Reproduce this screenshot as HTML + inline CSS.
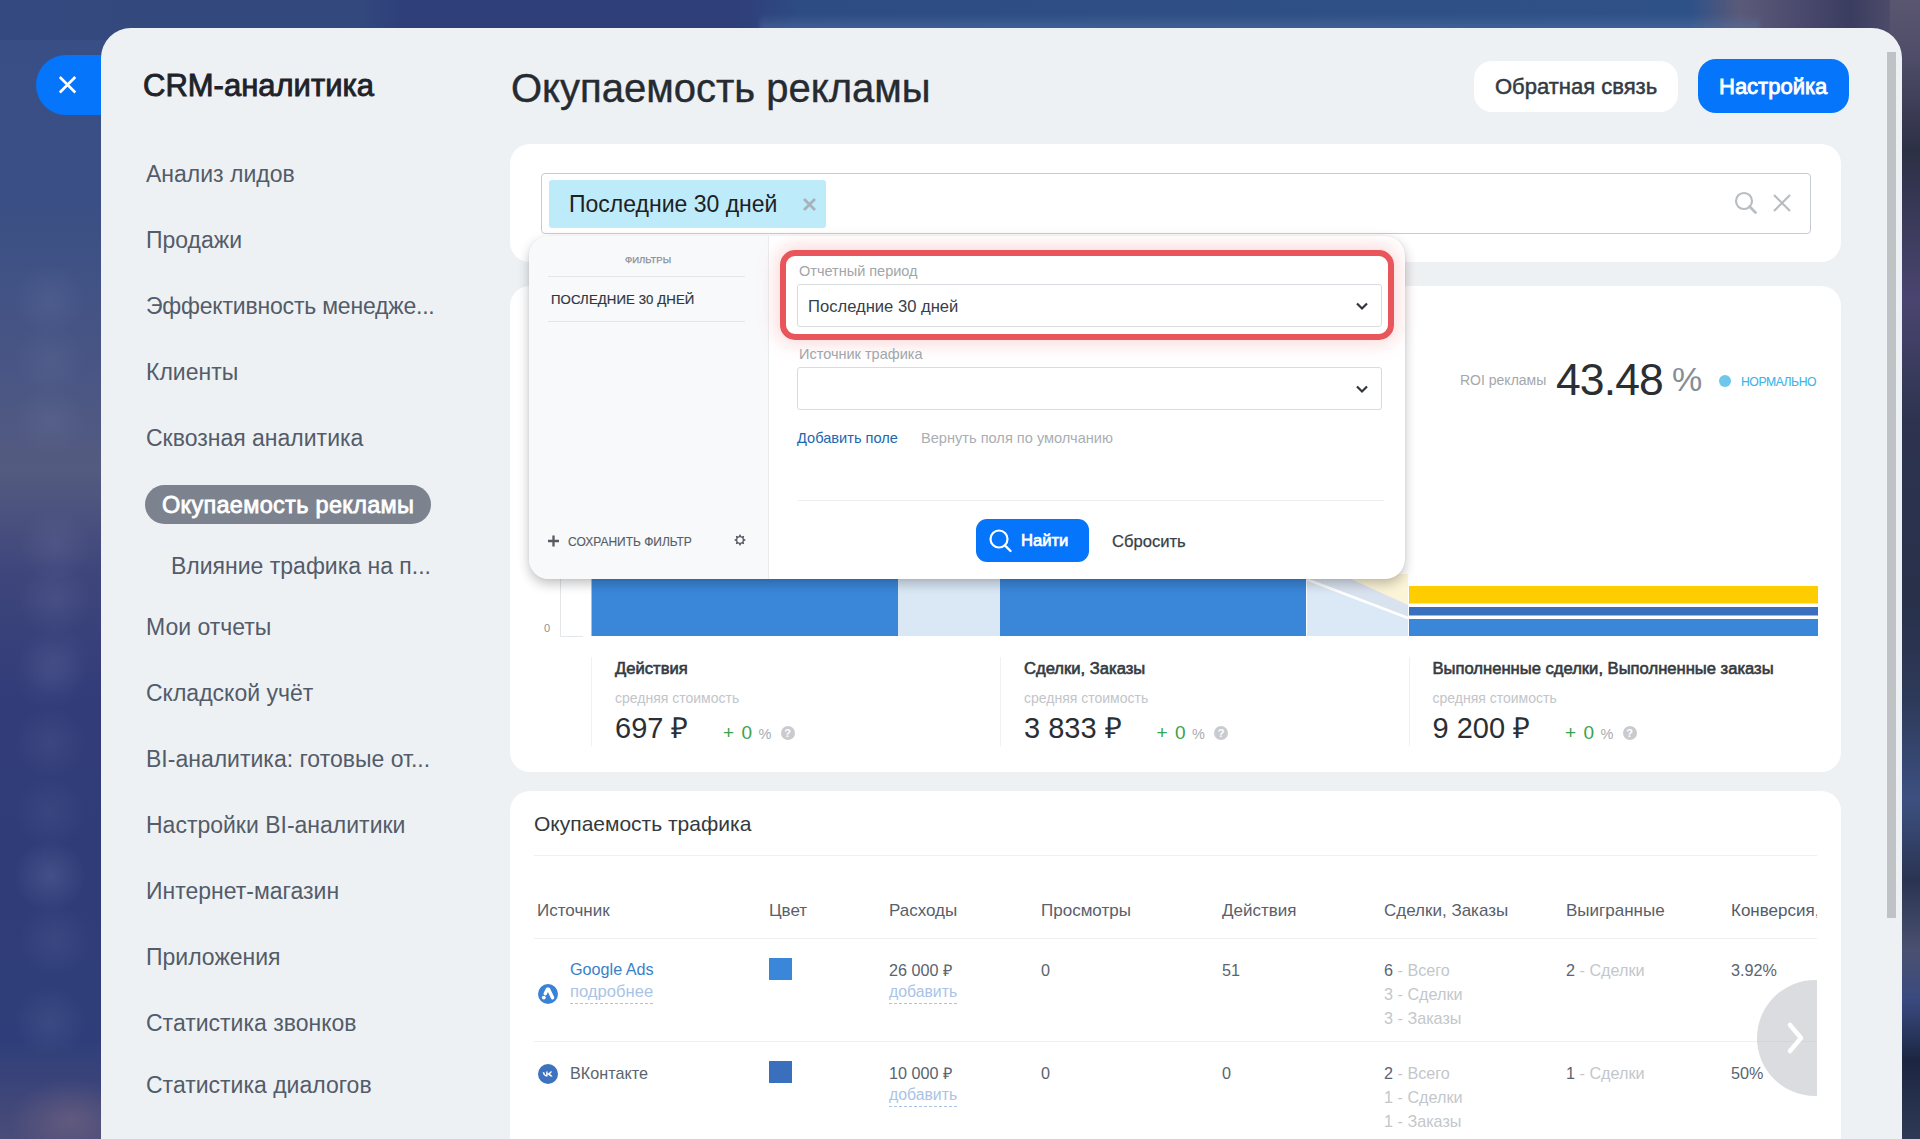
<!DOCTYPE html>
<html><head><meta charset="utf-8">
<style>
*{margin:0;padding:0;box-sizing:border-box}
html,body{width:1920px;height:1139px;overflow:hidden}
body{position:relative;font-family:"Liberation Sans",sans-serif;background:#33467c}
.a{position:absolute;white-space:nowrap;line-height:1}
#bg{position:absolute;left:0;top:0;width:1920px;height:1139px;background:linear-gradient(180deg,#394e84 0px,#3a4f85 200px,#4a5684 380px,#545b80 470px,#3f467c 570px,#323c79 700px,#2f3c78 900px,#2f3e7a 1040px,#4a4c78 1139px)}
#bgtop{position:absolute;left:0;top:0;width:1920px;height:40px;background:linear-gradient(90deg,#34497f 0px,#33497e 360px,#2f3f7a 400px,#2f3f7a 740px,#2e4c84 800px,#2e5086 1400px,#2e5188 1690px,#5b5a78 1740px,#4a4a6e 1800px,#3a3c60 1850px,#5a5670 1920px)}
#bgtopglow{position:absolute;left:760px;top:14px;width:1000px;height:16px;background:linear-gradient(180deg,rgba(90,120,170,0),rgba(90,120,170,.5));filter:blur(2px)}
#blobs{position:absolute;left:0;top:0;width:110px;height:1139px;background:radial-gradient(circle 36px at 50px 300px,rgba(200,210,240,0.07),rgba(200,210,240,0)),radial-gradient(circle 36px at 50px 360px,rgba(200,210,240,0.06),rgba(200,210,240,0)),radial-gradient(circle 36px at 50px 420px,rgba(200,210,240,0.06),rgba(200,210,240,0)),radial-gradient(circle 36px at 55px 545px,rgba(200,210,240,0.08),rgba(200,210,240,0)),radial-gradient(circle 36px at 55px 600px,rgba(200,210,240,0.08),rgba(200,210,240,0)),radial-gradient(circle 36px at 55px 660px,rgba(200,210,240,0.06),rgba(200,210,240,0)),radial-gradient(circle 36px at 50px 675px,rgba(200,210,240,0.06),rgba(200,210,240,0)),radial-gradient(circle 36px at 50px 743px,rgba(200,210,240,0.07),rgba(200,210,240,0)),radial-gradient(circle 36px at 50px 812px,rgba(200,210,240,0.06),rgba(200,210,240,0)),radial-gradient(circle 36px at 50px 876px,rgba(200,210,240,0.13),rgba(200,210,240,0)),radial-gradient(circle 36px at 55px 940px,rgba(200,210,240,0.07),rgba(200,210,240,0)),radial-gradient(circle 36px at 50px 1022px,rgba(200,210,240,0.08),rgba(200,210,240,0)),radial-gradient(ellipse 60px 40px at 70px 1120px,rgba(150,120,140,.35),rgba(150,120,140,0))}
#bgright{position:absolute;left:1890px;top:0;width:30px;height:1139px;background:linear-gradient(180deg,#5a5670 0px,#4e4c68 60px,#2c3045 150px,#3a3a5a 220px,#4a4570 300px,#2e3450 420px,#28304a 600px,#2e3a5a 700px,#3c5080 800px,#2a3452 880px,#4a5070 950px,#3a4a80 1000px,#1c2642 1060px,#2e3a55 1139px)}
#close{position:absolute;left:36px;top:55px;width:90px;height:60px;border-radius:30px 0 0 30px;background:#0575fb}
#panel{position:absolute;left:101px;top:28px;width:1801px;height:1140px;border-radius:30px 30px 0 0;background:#eef1f4;overflow:hidden}
#scroll{position:absolute;left:1887px;top:52px;width:9px;height:866px;background:#bfc3c5}
.side{color:#535c69;font-size:23px}
.card{position:absolute;background:#fff;border-radius:20px}
.st{font-size:16.6px;color:#333a40;-webkit-text-stroke:0.6px #333a40}
.sc{font-size:14px;color:#c2c5c9}
.sv{font-size:29px;color:#2b2f33}
.sp{font-size:19px}
.g{color:#3aa34b}
.pc{font-size:14.5px;color:#a9adb1}
.q{display:inline-block;width:14px;height:14px;border-radius:50%;background:#c9cbce;color:#fff;font-size:11px;font-weight:bold;text-align:center;line-height:14px;}
.lbl{font-size:14.5px;color:#a0a6ab}
.sel{width:585px;height:43px;border:1px solid #d8dce0;border-radius:3px;background:#fff}
.th{top:902px;font-size:17px;color:#58606b}
.td{font-size:16.2px;color:#5b6470}
.gr{color:#c3c7cb}
.lk{color:#a9c4e6;border-bottom:1px dashed #a9c4e6;padding-bottom:3px;font-size:15.8px}
.ic{width:20px;height:20px;border-radius:50%}
.ic svg{display:block}
</style></head>
<body>
<div id="bg"></div><div id="bgtop"></div><div id="bgtopglow"></div><div id="bgright"></div><div id="blobs"></div>
<div id="close"><svg width="60" height="60" style="position:absolute;left:1px;top:0" viewBox="0 0 60 60"><path d="M22.8 22 L38.3 37.5 M38.3 22 L22.8 37.5" stroke="#fff" stroke-width="2.6"/></svg></div>
<div id="panel"></div>
<div id="scroll"></div>

<!-- sidebar -->
<div class="a" style="left:143px;top:70px;font-size:31px;color:#1f2329;-webkit-text-stroke:0.9px #1f2329">CRM-аналитика</div>
<div class="a side" style="left:146px;top:163px">Анализ лидов</div>
<div class="a side" style="left:146px;top:229px">Продажи</div>
<div class="a side" style="left:146px;top:295px;letter-spacing:-0.2px">Эффективность менедже...</div>
<div class="a side" style="left:146px;top:361px">Клиенты</div>
<div class="a side" style="left:146px;top:427px">Сквозная аналитика</div>
<div class="a" style="left:145px;top:485px;width:286px;height:39px;border-radius:20px;background:#7c838f"></div>
<div class="a side" style="left:162px;top:494px;color:#fff;font-size:23.5px;letter-spacing:0.3px;-webkit-text-stroke:0.8px #fff">Окупаемость рекламы</div>
<div class="a side" style="left:171px;top:555px">Влияние трафика на п...</div>
<div class="a side" style="left:146px;top:616px">Мои отчеты</div>
<div class="a side" style="left:146px;top:682px">Складской учёт</div>
<div class="a side" style="left:146px;top:748px">BI-аналитика: готовые от...</div>
<div class="a side" style="left:146px;top:814px">Настройки BI-аналитики</div>
<div class="a side" style="left:146px;top:880px">Интернет-магазин</div>
<div class="a side" style="left:146px;top:946px">Приложения</div>
<div class="a side" style="left:146px;top:1012px">Статистика звонков</div>
<div class="a side" style="left:146px;top:1074px">Статистика диалогов</div>

<!-- header -->
<div class="a" style="left:511px;top:68px;font-size:40px;color:#262b31;-webkit-text-stroke:0.4px #262b31">Окупаемость рекламы</div>
<div class="a" style="left:1474px;top:61px;width:204px;height:51px;border-radius:18px;background:#fff"></div>
<div class="a" style="left:1495px;top:76px;font-size:22px;color:#333a44;-webkit-text-stroke:0.5px #333a44">Обратная связь</div>
<div class="a" style="left:1698px;top:59px;width:151px;height:54px;border-radius:18px;background:#0575fb"></div>
<div class="a" style="left:1719px;top:76px;font-size:22px;color:#fff;-webkit-text-stroke:0.85px #fff">Настройка</div>


<!-- filter card -->
<div class="card" style="left:510px;top:144px;width:1331px;height:118px"></div>
<div class="a" style="left:541px;top:173px;width:1270px;height:61px;border:1.5px solid #c5ccd3;border-radius:4px;background:#fff"></div>
<div class="a" style="left:548.5px;top:179.5px;width:277px;height:48px;border-radius:3px;background:#bdebfa"></div>
<div class="a" style="left:569px;top:193px;font-size:23px;color:#1f2024">Последние 30 дней</div>
<svg class="a" style="left:802px;top:197px" width="15" height="15" viewBox="0 0 15 15"><path d="M2 2 L13 13 M13 2 L2 13" stroke="#a6b3bb" stroke-width="2.8"/></svg>
<svg class="a" style="left:1730px;top:188px" width="30" height="30" viewBox="0 0 30 30"><circle cx="14" cy="13" r="8" fill="none" stroke="#b8bdc2" stroke-width="2.2"/><path d="M19.5 18.5 L25.5 24.5" stroke="#b8bdc2" stroke-width="2.8" stroke-linecap="round"/></svg>
<svg class="a" style="left:1772px;top:193px" width="20" height="20" viewBox="0 0 20 20"><path d="M2 2 L18 18 M18 2 L2 18" stroke="#b8bdc2" stroke-width="2.2"/></svg>



<!-- chart card -->
<div class="card" style="left:510px;top:286px;width:1331px;height:486px"></div>
<div class="a" style="left:1460px;top:373px;font-size:14px;color:#a3a8ad">ROI рекламы</div>
<div class="a" style="left:1556px;top:358px;font-size:44.5px;letter-spacing:-0.9px;color:#2b2f33">43.48</div>
<div class="a" style="left:1672px;top:362px;font-size:34px;color:#868d95">%</div>
<div class="a" style="left:1719px;top:375px;width:12px;height:12px;border-radius:50%;background:#6cc7ea"></div>
<div class="a" style="left:1741px;top:376px;font-size:12.2px;color:#3ab5e8;letter-spacing:-0.45px;-webkit-text-stroke:0.1px #3ab5e8">НОРМАЛЬНО</div>

<svg class="a" style="left:540px;top:480px" width="1300" height="170" viewBox="540 480 1300 170">
 <path d="M560.5 480 V636.5 H583" fill="none" stroke="#e3e6e9" stroke-width="1"/>
 <rect x="591.5" y="480" width="306.5" height="156" fill="#3a87d9"/>
 <rect x="898" y="480" width="102" height="156" fill="#dae8f6"/>
 <rect x="1000" y="480" width="306" height="156" fill="#3a87d9"/>
 <polygon points="1307,480 1385,480 1385,574 1408,574 1408,636 1307,636" fill="#dbe8f6"/>
 <polygon points="1307,480 1385,480 1385,574 1408,574 1408,618 1307,579" fill="#d9e2ef"/>
 <polygon points="1340,574 1408,574 1408,605" fill="#fcf4d6"/>
 <path d="M1307 579.5 L1408 618" stroke="#fff" stroke-width="2.5"/>
 <rect x="1409" y="586" width="409" height="17.5" fill="#fecd00"/>
 <rect x="1409" y="607" width="409" height="8.5" fill="#3a6fbd"/>
 <rect x="1409" y="619" width="409" height="17" fill="#3a87d9"/>
</svg>
<div class="a" style="left:544px;top:623px;font-size:11px;color:#8d9297">0</div>

<div class="a" style="left:591px;top:657px;width:1px;height:89px;background:#eff1f3"></div>
<div class="a" style="left:1000px;top:657px;width:1px;height:89px;background:#eff1f3"></div>
<div class="a" style="left:1409px;top:657px;width:1px;height:89px;background:#eff1f3"></div>

<div class="a st" style="left:615px;top:660.5px">Действия</div>
<div class="a sc" style="left:615px;top:691px">средняя стоимость</div>
<div class="a sv" style="left:615px;top:714px">697 ₽</div>
<div class="a g" style="left:723px;top:722.5px;font-size:19px">+</div>
<div class="a g" style="left:741.5px;top:722.5px;font-size:19px">0</div>
<div class="a pc" style="left:758.5px;top:727px">%</div>
<div class="a q" style="left:780.5px;top:726px">?</div>
<div class="a st" style="left:1024px;top:660.5px">Сделки, Заказы</div>
<div class="a sc" style="left:1024px;top:691px">средняя стоимость</div>
<div class="a sv" style="left:1024px;top:714px">3 833 ₽</div>
<div class="a g" style="left:1156.5px;top:722.5px;font-size:19px">+</div>
<div class="a g" style="left:1175.0px;top:722.5px;font-size:19px">0</div>
<div class="a pc" style="left:1192.0px;top:727px">%</div>
<div class="a q" style="left:1214.0px;top:726px">?</div>
<div class="a st" style="left:1432.5px;top:660.5px">Выполненные сделки, Выполненные заказы</div>
<div class="a sc" style="left:1432.5px;top:691px">средняя стоимость</div>
<div class="a sv" style="left:1432.5px;top:714px">9 200 ₽</div>
<div class="a g" style="left:1565px;top:722.5px;font-size:19px">+</div>
<div class="a g" style="left:1583.5px;top:722.5px;font-size:19px">0</div>
<div class="a pc" style="left:1600.5px;top:727px">%</div>
<div class="a q" style="left:1622.5px;top:726px">?</div>

<!-- table card -->
<div class="card" style="left:510px;top:791px;width:1331px;height:400px"></div>
<div class="a" style="left:534px;top:813px;font-size:21px;color:#333a40">Окупаемость трафика</div>
<div class="a" style="left:534px;top:855px;width:1283px;height:1px;background:#eef0f2"></div>
<div class="a th" style="left:537px">Источник</div>
<div class="a th" style="left:769px">Цвет</div>
<div class="a th" style="left:889px">Расходы</div>
<div class="a th" style="left:1041px">Просмотры</div>
<div class="a th" style="left:1222px">Действия</div>
<div class="a th" style="left:1384px">Сделки, Заказы</div>
<div class="a th" style="left:1566px">Выигранные</div>
<div class="a" style="left:1731px;top:902px;width:86px;overflow:hidden;font-size:17px;line-height:1;color:#535c69">Конверсия, %</div>
<div class="a" style="left:534px;top:938px;width:1283px;height:1px;background:#eef0f2"></div>
<div class="a" style="left:534px;top:1041px;width:1283px;height:1px;background:#eef0f2"></div>

<div class="a ic" style="left:538px;top:984px;background:#3a82d8"><svg width="20" height="20" viewBox="0 0 20 20"><path d="M10.5 5.2 L14.6 13.8" stroke="#fff" stroke-width="3.4" stroke-linecap="round"/><path d="M9.4 5.2 L7.2 9.8" stroke="#fff" stroke-width="3.4" stroke-linecap="round"/><circle cx="5.8" cy="13.6" r="1.9" fill="#fff"/></svg></div>
<div class="a td" style="left:570px;top:961px;color:#3a7fcb">Google Ads</div>
<div class="a td lk" style="left:570px;top:983.5px;font-size:16.6px">подробнее</div>
<div class="a" style="left:769px;top:958px;width:23px;height:22px;background:#3a87d9"></div>
<div class="a td" style="left:889px;top:962px">26 000 ₽</div>
<div class="a td lk" style="left:889px;top:984px">добавить</div>
<div class="a td" style="left:1041px;top:962px">0</div>
<div class="a td" style="left:1222px;top:962px">51</div>
<div class="a td" style="left:1384px;top:962px">6<span class="gr"> - Всего</span></div>
<div class="a td gr" style="left:1384px;top:986px">3 - Сделки</div>
<div class="a td gr" style="left:1384px;top:1010px">3 - Заказы</div>
<div class="a td" style="left:1566px;top:962px">2<span class="gr"> - Сделки</span></div>
<div class="a td" style="left:1731px;top:962px">3.92%</div>

<div class="a ic" style="left:538px;top:1063.5px;background:#3d72be"><svg width="20" height="20" viewBox="0 0 20 20"><path d="M4.6 8.2 C5.2 11.3 7.2 12.6 9.6 12.6 V10.6 C10.6 10.8 11.6 11.6 12.2 12.6 H14.6 C14 11.2 12.8 10.3 12 9.9 C12.8 9.4 13.7 8.5 14.2 7.6 H12.2 C11.8 8.5 10.8 9.4 9.6 9.6 V7.6 H8.2 V11 C7.3 10.8 6.5 9.8 6.3 8.2 Z" fill="#fff"/></svg></div>
<div class="a td" style="left:570px;top:1065px">ВКонтакте</div>
<div class="a" style="left:769px;top:1060.5px;width:23px;height:22px;background:#3a6fbd"></div>
<div class="a td" style="left:889px;top:1065px">10 000 ₽</div>
<div class="a td lk" style="left:889px;top:1087px">добавить</div>
<div class="a td" style="left:1041px;top:1065px">0</div>
<div class="a td" style="left:1222px;top:1065px">0</div>
<div class="a td" style="left:1384px;top:1065px">2<span class="gr"> - Всего</span></div>
<div class="a td gr" style="left:1384px;top:1089px">1 - Сделки</div>
<div class="a td gr" style="left:1384px;top:1113px">1 - Заказы</div>
<div class="a td" style="left:1566px;top:1065px">1<span class="gr"> - Сделки</span></div>
<div class="a td" style="left:1731px;top:1065px">50%</div>

<div class="a" style="left:1757px;top:980px;width:60px;height:116px;overflow:hidden">
 <div style="position:absolute;left:0;top:0;width:116px;height:116px;border-radius:50%;background:rgba(190,192,198,.55)"></div>
 <svg style="position:absolute;left:26px;top:40px" width="24" height="36" viewBox="0 0 24 36"><path d="M7 5 L18 18 L7 31" fill="none" stroke="#fff" stroke-width="4.5" stroke-linecap="round" stroke-linejoin="round"/></svg>
</div>



<!-- popup -->
<div class="a" style="left:529px;top:236px;width:876px;height:343px;border-radius:20px;background:#fff;box-shadow:0 5px 12px rgba(0,0,0,.24),0 0 2px rgba(0,0,0,.08);overflow:hidden">
 <div style="position:absolute;left:0;top:0;width:240px;height:343px;background:#f8f9fb;border-right:1px solid #e9ecef"></div>
</div>
<div class="a" style="left:625px;top:255px;font-size:9.5px;color:#8a9096;-webkit-text-stroke:0.25px #8a9096">ФИЛЬТРЫ</div>
<div class="a" style="left:548px;top:276px;width:197px;height:1px;background:#e4e7ea"></div>
<div class="a" style="left:551px;top:293px;font-size:13.2px;color:#2c3640;letter-spacing:0.1px;-webkit-text-stroke:0.2px #2c3640">ПОСЛЕДНИЕ 30 ДНЕЙ</div>
<div class="a" style="left:548px;top:321px;width:197px;height:1px;background:#e4e7ea"></div>
<svg class="a" style="left:547px;top:534px" width="14" height="14" viewBox="0 0 14 14"><path d="M6.5 1.5 V12.5 M1 7 H12" stroke="#555b61" stroke-width="2.3"/></svg>
<div class="a" style="left:568px;top:535.5px;font-size:12px;color:#575e66;-webkit-text-stroke:0.15px #575e66">СОХРАНИТЬ ФИЛЬТР</div>
<svg class="a" style="left:732.5px;top:533.4px" width="14" height="14" viewBox="-7 -7 14 14"><polygon points="0.00,-5.90 -1.49,-3.60 -4.17,-4.17 -3.60,-1.49 -5.90,-0.00 -3.60,1.49 -4.17,4.17 -1.49,3.60 -0.00,5.90 1.49,3.60 4.17,4.17 3.60,1.49 5.90,0.00 3.60,-1.49 4.17,-4.17 1.49,-3.60" fill="#555b61"/><circle r="2.7" fill="#f8f9fb"/></svg>

<div class="a" style="left:780px;top:250px;width:614px;height:90px;border:6px solid #e8555a;border-radius:15px;box-shadow:0 0 18px 4px rgba(240,120,125,.28)"></div>
<div class="a lbl" style="left:799px;top:264px">Отчетный период</div>
<div class="a sel" style="left:797px;top:284px"></div>
<div class="a" style="left:808px;top:299px;font-size:16.6px;color:#36404c">Последние 30 дней</div>
<svg class="a" style="left:1354px;top:299px" width="16" height="14" viewBox="0 0 16 14"><path d="M3 4.5 L8 9.5 L13 4.5" fill="none" stroke="#2f353b" stroke-width="2.2"/></svg>
<div class="a lbl" style="left:799px;top:347px">Источник трафика</div>
<div class="a sel" style="left:797px;top:367px"></div>
<svg class="a" style="left:1354px;top:382px" width="16" height="14" viewBox="0 0 16 14"><path d="M3 4.5 L8 9.5 L13 4.5" fill="none" stroke="#2f353b" stroke-width="2.2"/></svg>
<div class="a" style="left:797px;top:431px;font-size:14.6px;color:#2067b0">Добавить поле</div>
<div class="a" style="left:921px;top:431px;font-size:14.6px;color:#a9aeb3">Вернуть поля по умолчанию</div>
<div class="a" style="left:798px;top:500px;width:586px;height:1px;background:#eceef0"></div>
<div class="a" style="left:976px;top:519px;width:113px;height:43px;border-radius:11px;background:#0575fb"></div>
<svg class="a" style="left:986px;top:527px" width="28" height="28" viewBox="0 0 28 28"><circle cx="13" cy="12" r="8.5" fill="none" stroke="#fff" stroke-width="2.2"/><path d="M19 18.5 L24.5 24" stroke="#fff" stroke-width="2.4" stroke-linecap="round"/></svg>
<div class="a" style="left:1021px;top:533px;font-size:16.6px;color:#fff;-webkit-text-stroke:0.7px #fff">Найти</div>
<div class="a" style="left:1112px;top:534px;font-size:16.6px;color:#383f47;-webkit-text-stroke:0.25px #383f47">Сбросить</div>
</body></html>
